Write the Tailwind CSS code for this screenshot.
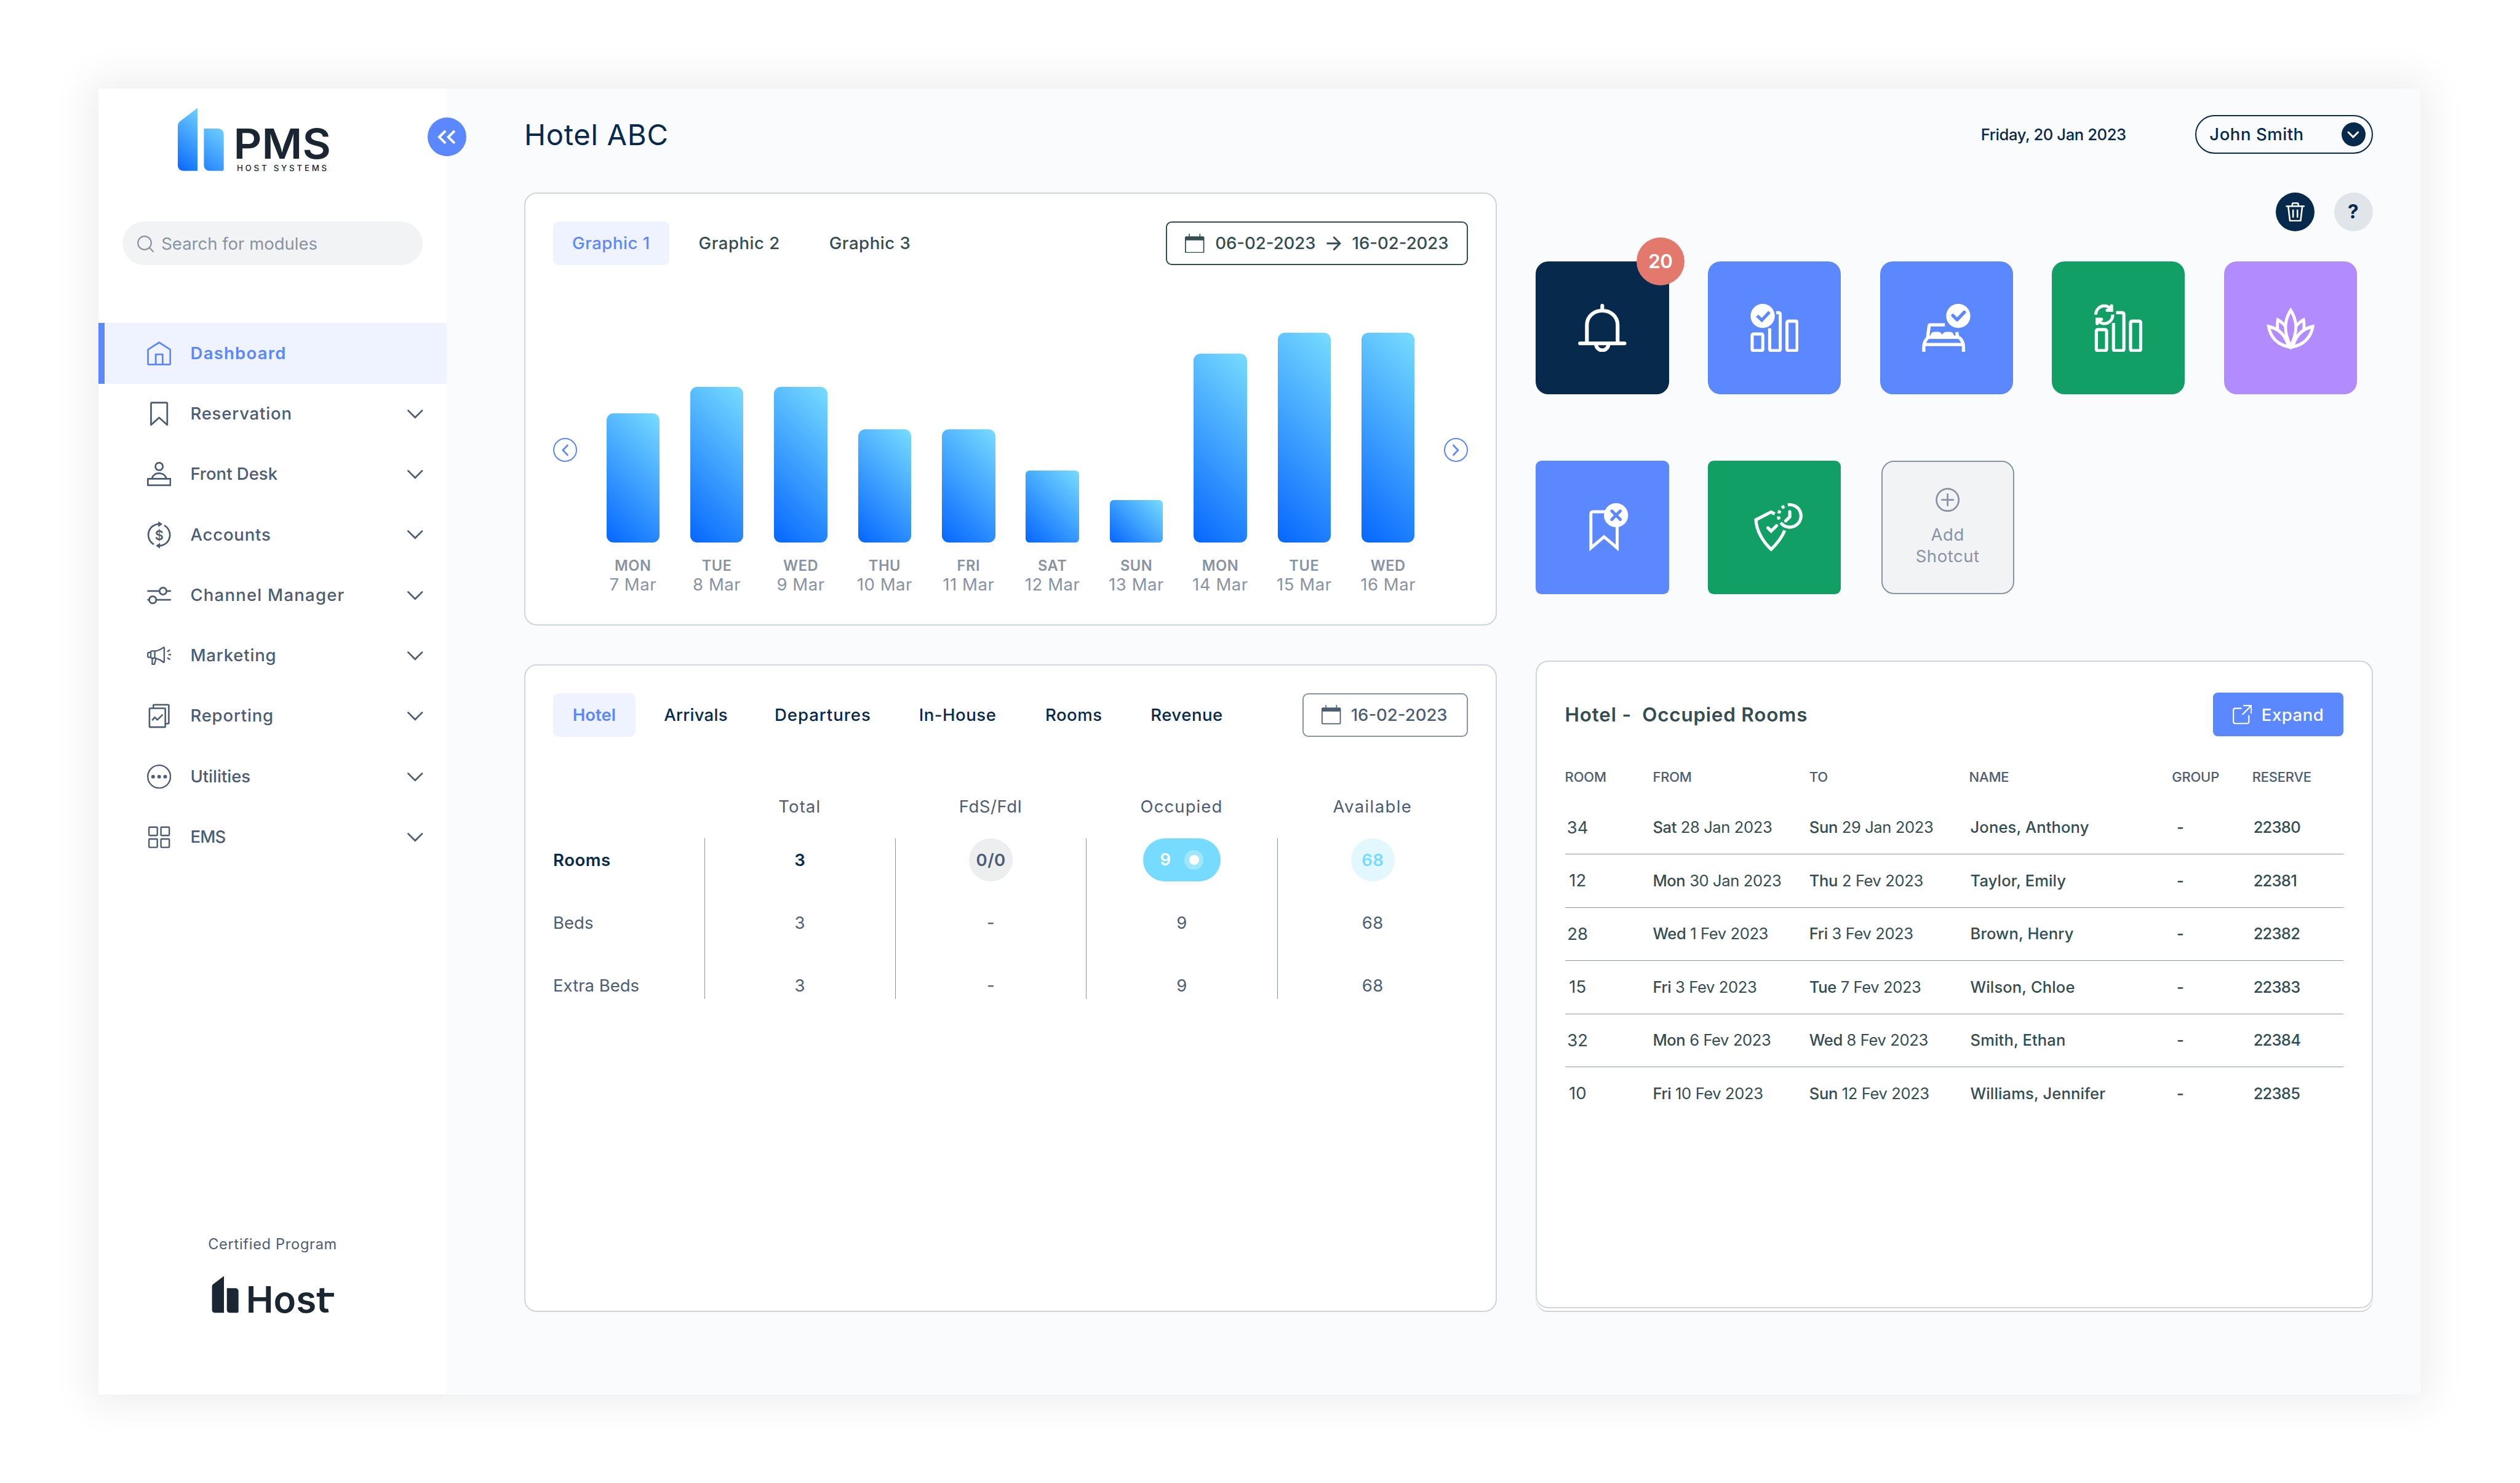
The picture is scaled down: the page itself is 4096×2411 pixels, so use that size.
<!DOCTYPE html>
<html lang="en" class="text-[31.45px]">
<head>
  <meta charset="UTF-8" />
  <meta name="viewport" content="width=device-width, initial-scale=1.0"/>
  <title>PMS - Hotel ABC</title>
  <script src="https://cdn.jsdelivr.net/npm/@tailwindcss/browser@4"></script>
</head>
<body class="bg-white font-[Inter,sans-serif] text-sm tracking-[0.02em] w-[4096px] h-[2411px] overflow-hidden pt-[144px] pl-[160px]">

  <div class="flex w-480 h-270 bg-[#f9fbfd] shadow-[0_0_1.9rem_0.5rem_rgba(0,0,0,0.065)]">

    <!-- Sidebar -->
    <aside class="relative flex flex-col w-72 bg-white text-[#4c5d73]">
      <div class="h-27.5 pt-4 pl-16.25">
        <svg class="w-31.75 h-13.25 overflow-visible" viewBox="0 0 127 53">
          <defs>
            <linearGradient id="logoFill" gradientUnits="userSpaceOnUse" x1=".5" y1="50" x2="31.3" y2="11.6">
              <stop offset="0" stop-color="#0c6cff"/>
              <stop offset="1" stop-color="#70d0ff"/>
            </linearGradient>
          </defs>
          <path fill="url(#logoFill)" d="M16.8.2V52.3H4.8a4.3 4.3 0 0 1-4.3-4.3V15.200q0-2.200 1.500-3.600z"/>
          <path fill="url(#logoFill)" d="M22.1 17.300h12a4.400 4.400 0 0 1 4.400 4.400v29a1.600 1.600 0 0 1-1.600 1.600H26.400a4.300 4.300 0 0 1-4.300-4.300z"/>
          <text x="46.6" y="42.100" textLength="80.500" lengthAdjust="spacingAndGlyphs" font-size="34.200" font-weight="600" letter-spacing="0" fill="#1a2733">PMS</text>
          <text x="49.300" y="52.300" textLength="75" font-size="6.800" font-weight="500" fill="#1a2733">HOST SYSTEMS</text>
        </svg>
      </div>
      <button class="absolute top-6 -right-4 flex items-center justify-center size-8 rounded-full bg-[#5b87ff]">
        <svg class="w-3.75 h-3" viewBox="0 0 15 12" fill="none" stroke="#fff" stroke-width="2"><path d="M6.700.9 1.500 6l5.200 5.100M14.200.9 9 6l5.200 5.100"/></svg>
      </button>

      <label class="flex items-center gap-1.5 h-9 w-62 ml-5 pl-3 pt-0.25 rounded-full bg-[#f2f3f5] text-[#8793a3] tracking-normal">
        <svg class="size-3.5" viewBox="0 0 14 14" fill="none" stroke="currentColor" stroke-width="1.100" stroke-linecap="round"><circle cx="6.100" cy="6.100" r="5.500"/><path d="m10.200 10.200 3.200 3.200"/></svg>
        <span>Search for modules</span>
      </label>

      <nav class="mt-12 font-medium tracking-[0.03em]">
        <a class="flex items-center h-12.5 pl-8.75 border-l-[10px] border-[#5b87ff] bg-[#eef3ff] text-[#5b87ff] font-semibold tracking-[0.045em]">
          <svg class="size-5 mr-4" viewBox="0 0 20 20" fill="none" stroke="currentColor" stroke-width="1.400" stroke-linejoin="round"><path d="M10 .9.8 6.800v11.600a.8.8 0 0 0 .8.8h16.800a.8.8 0 0 0 .8-.8V6.800zM7.200 19v-8.200h5.700V19"/></svg>
          Dashboard
        </a>
        <a class="flex items-center h-12.5 pl-10 pr-4.75">
          <svg class="size-5 mr-4" viewBox="0 0 20 20" fill="none" stroke="currentColor" stroke-width="1.400" stroke-linejoin="round"><path d="M3.300 19.200V1.400a.6.6 0 0 1 .6-.6h12.200a.6.6 0 0 1 .6.6v17.800L10 13.200z"/></svg>
          Reservation
          <svg class="w-3.5 h-2 ml-auto" viewBox="0 0 14 8" fill="none" stroke="currentColor" stroke-width="1.400" stroke-linecap="round"><path d="M1.200 1.200 7 7l5.800-5.800"/></svg>
        </a>
        <a class="flex items-center h-12.5 pl-10 pr-4.75 tracking-normal">
          <svg class="size-5 mr-4" viewBox="0 0 20 20" fill="none" stroke="currentColor" stroke-width="1.400"><circle cx="10" cy="3.750" r="3.100"/><path d="M4 13.800a6.100 5.500 0 0 1 12 0"/><path stroke-linejoin="round" d="M.7 13.900h18.600v5.400H.7z"/></svg>
          Front Desk
          <svg class="w-3.5 h-2 ml-auto" viewBox="0 0 14 8" fill="none" stroke="currentColor" stroke-width="1.400" stroke-linecap="round"><path d="M1.200 1.200 7 7l5.800-5.800"/></svg>
        </a>
        <a class="flex items-center h-12.5 pl-10 pr-4.75">
          <svg class="size-5 mr-4 overflow-visible" viewBox="0 0 20 20" fill="none" stroke="currentColor" stroke-width="1.400"><path d="M5.600 17.800A9 9 0 0 1 10.500 1M14.200 2.100A9 9 0 0 1 9.500 19"/><path fill="currentColor" stroke="none" d="M9.300-1.300 12.800 1 9.300 3.500zM10.700 16.500 7.300 19l3.400 2.300z"/><text x="10.100" y="14" text-anchor="middle" font-size="11" font-weight="600" letter-spacing="0" fill="currentColor" stroke="none">$</text></svg>
          Accounts
          <svg class="w-3.5 h-2 ml-auto" viewBox="0 0 14 8" fill="none" stroke="currentColor" stroke-width="1.400" stroke-linecap="round"><path d="M1.200 1.200 7 7l5.800-5.800"/></svg>
        </a>
        <a class="flex items-center h-12.5 pl-10 pr-4.75 tracking-[0.045em]">
          <svg class="size-5 mr-4" viewBox="0 0 20 20" fill="none" stroke="currentColor" stroke-width="1.400" stroke-linecap="round"><circle cx="13.200" cy="6.600" r="2.900"/><circle cx="4.700" cy="13.800" r="2.900"/><path d="M.8 6.600h9.400M16.200 6.600h3M.8 13.800h1M7.700 13.800h11.500"/></svg>
          Channel Manager
          <svg class="w-3.5 h-2 ml-auto" viewBox="0 0 14 8" fill="none" stroke="currentColor" stroke-width="1.400" stroke-linecap="round"><path d="M1.200 1.200 7 7l5.800-5.800"/></svg>
        </a>
        <a class="flex items-center h-12.5 pl-10 pr-4.75">
          <svg class="size-5 mr-4" viewBox="0 0 20 20" fill="none" stroke="currentColor" stroke-width="1.200" stroke-linecap="round" stroke-linejoin="round"><path d="M6.400 6.500C9.500 6.200 11.800 4.700 13.400 3.500q.8-.5.8.4v11.200q0 .9-.8.4C11.800 14.200 9.500 12.600 6.400 12.200zM6.400 6.300H4a.9.9 0 0 0-.9.9v4.100a.9.9 0 0 0 .9.9h2.400M3.100 7.500H1.500a.9.9 0 0 0-.9.9v2.200a.9.9 0 0 0 .9.900h1.600M4.300 12.500v4.700h1.800l1.300-4.500M17.100 6.600l1.500-1M18.200 9.300h1.200M17.100 12.100l1.500 1"/></svg>
          Marketing
          <svg class="w-3.5 h-2 ml-auto" viewBox="0 0 14 8" fill="none" stroke="currentColor" stroke-width="1.400" stroke-linecap="round"><path d="M1.200 1.200 7 7l5.800-5.800"/></svg>
        </a>
        <a class="flex items-center h-12.5 pl-10 pr-4.75">
          <svg class="size-5 mr-4" viewBox="0 0 20 20" fill="none" stroke="currentColor" stroke-width="1.300" stroke-linejoin="round"><rect x="2" y="3.800" width="13.100" height="15.600" rx=".5"/><path d="M5.200 3.800V1.400a.5.5 0 0 1 .5-.5h11.800a.5.5 0 0 1 .5.5V16a.5.5 0 0 1-.5.5h-2.400M4.200 13.800l2.200-2.500 2.100 2.100L13 9"/></svg>
          Reporting
          <svg class="w-3.5 h-2 ml-auto" viewBox="0 0 14 8" fill="none" stroke="currentColor" stroke-width="1.400" stroke-linecap="round"><path d="M1.200 1.200 7 7l5.800-5.800"/></svg>
        </a>
        <a class="flex items-center h-12.5 pl-10 pr-4.75 tracking-normal">
          <svg class="size-5 mr-4" viewBox="0 0 20 20"><circle cx="10" cy="10" r="9.400" fill="none" stroke="currentColor" stroke-width="1.200"/><g fill="currentColor"><circle cx="5" cy="10" r="1.500"/><circle cx="10" cy="10" r="1.500"/><circle cx="15" cy="10" r="1.500"/></g></svg>
          Utilities
          <svg class="w-3.5 h-2 ml-auto" viewBox="0 0 14 8" fill="none" stroke="currentColor" stroke-width="1.400" stroke-linecap="round"><path d="M1.200 1.200 7 7l5.800-5.800"/></svg>
        </a>
        <a class="flex items-center h-12.5 pl-10 pr-4.75 tracking-[-0.03em]">
          <svg class="size-5 mr-4" viewBox="0 0 20 20" fill="none" stroke="currentColor" stroke-width="1.200"><rect x="1.600" y="1.900" width="6.900" height="6.900" rx=".5"/><rect x="11.500" y="1.900" width="6.900" height="6.900" rx=".5"/><rect x="1.600" y="11.700" width="6.900" height="6.900" rx=".5"/><rect x="11.500" y="11.700" width="6.900" height="6.900" rx=".5"/></svg>
          EMS
          <svg class="w-3.5 h-2 ml-auto" viewBox="0 0 14 8" fill="none" stroke="currentColor" stroke-width="1.400" stroke-linecap="round"><path d="M1.200 1.200 7 7l5.800-5.800"/></svg>
        </a>
      </nav>

      <div class="flex flex-col items-center mt-auto mb-16.75">
        <p class="text-xs mb-4.5 tracking-[0.03em]">Certified Program</p>
        <svg class="w-25.5 h-7.75 overflow-visible" viewBox="0 0 102 31" fill="#1a2733">
          <path d="M10.700.3v30.400H3.300A2.500 2.500 0 0 1 .8 28.200V8.700q0-1 .8-1.600zM13.100 10.300h7.100a2.500 2.500 0 0 1 2.500 2.500v16.900a1 1 0 0 1-1 1h-6.100a2.500 2.500 0 0 1-2.500-2.500z"/>
          <text x="28.900" y="30.700" textLength="69" lengthAdjust="spacingAndGlyphs" font-size="30.200" font-weight="600" letter-spacing="0">Host</text>
          <path d="M94 14.200h7.700v3.100H94z"/>
        </svg>
      </div>
    </aside>

    <!-- Main -->
    <main class="flex-1 pl-16 pr-[2.46rem]">
      <header class="flex items-center h-19 mb-2.5 text-[#06294c]">
        <h1 class="text-2xl tracking-[0.015em] pt-0.25">Hotel ABC</h1>
        <span class="ml-auto pt-0.25 text-[0.8125rem] font-medium tracking-[-0.015em]">Friday, 20 Jan 2023</span>
        <button class="flex items-center justify-between w-36.75 h-8 ml-14.25 pl-2.75 pr-1.25 rounded-full border-[2.5px] border-[#06294c] font-medium">
          John Smith
          <span class="flex items-center justify-center size-5 rounded-full bg-[#06294c]">
            <svg class="w-2.5 h-1.5" viewBox="0 0 10 6" fill="none" stroke="#fff" stroke-width="1.500" stroke-linecap="round"><path d="m1 1 4 4 4-4"/></svg>
          </span>
        </button>
      </header>

      <div class="flex justify-between">
        <!-- Left column -->
        <div class="flex flex-col gap-8 w-[50.28rem]">
          <section class="h-89.5 p-[calc(1.5rem-2px)] rounded-[0.65rem] border-2 border-[#ced5dd] bg-white">
            <div class="flex gap-2 text-[#344d52] font-medium">
              <button class="h-9 w-24 rounded-[0.3rem] bg-[#eef3ff] text-[#5b87ff]">Graphic 1</button>
              <button class="h-9 w-25">Graphic 2</button>
              <button class="h-9 w-25">Graphic 3</button>
              <button class="flex items-center justify-between h-9 w-62.5 ml-auto px-3.75 rounded-[0.3rem] border-2 border-[#344d52] tracking-normal">
                <svg class="size-4" viewBox="0 0 16 16" fill="currentColor"><path d="M3.200 0h.8v2.200h8V0h.8v2.200H15a1 1 0 0 1 1 1V15a1 1 0 0 1-1 1H1a1 1 0 0 1-1-1V3.200a1 1 0 0 1 1-1h2.200zM.9 5.500v9.600h14.200V5.500z"/></svg>
                06-02-2023
                <svg class="size-3" viewBox="0 0 12 12" fill="none" stroke="currentColor" stroke-width="1.500" stroke-linecap="round" stroke-linejoin="round"><path d="M.8 6h10.400M6.300 1l4.900 5-4.900 5"/></svg>
                16-02-2023
              </button>
            </div>
            <div class="relative mt-14">
              <button class="absolute left-0 top-21.75 flex items-center justify-center size-5 rounded-full border-2 border-[#5b87ff]">
                <svg class="w-1.5 h-2.5" viewBox="0 0 6 10" fill="none" stroke="#5b87ff" stroke-width="1.400"><path d="M5.200.6 1 5l4.200 4.400"/></svg>
              </button>
              <div id="chart" class="flex items-end justify-between mx-11"></div>
              <button class="absolute right-0 top-21.75 flex items-center justify-center size-5 rounded-full border-2 border-[#5b87ff]">
                <svg class="w-1.5 h-2.5" viewBox="0 0 6 10" fill="none" stroke="#5b87ff" stroke-width="1.400"><path d="M.8.6 5 5 .8 9.400"/></svg>
              </button>
            </div>
          </section>

          <section class="h-134 p-[calc(1.5rem-2px)] rounded-[0.65rem] border-2 border-[#ced5dd] bg-white">
            <div class="flex gap-2 text-[#06294c] font-medium">
              <button class="h-9 w-17 rounded-[0.3rem] bg-[#eef3ff] text-[#5b87ff] font-semibold tracking-normal">Hotel</button>
              <button class="h-9 w-21 tracking-[0.01em]">Arrivals</button>
              <button class="h-9 w-27.5 tracking-[0.035em]">Departures</button>
              <button class="h-9 w-24.25">In-House</button>
              <button class="h-9 w-19.75">Rooms</button>
              <button class="h-9 w-23">Revenue</button>
              <button class="flex items-center justify-between h-9 w-34.25 ml-auto pl-3.75 pr-4 rounded-[0.3rem] border-2 border-[#8696a6] text-[#4c5d73] tracking-normal">
                <svg class="size-4" viewBox="0 0 16 16" fill="currentColor"><path d="M3.200 0h.8v2.200h8V0h.8v2.200H15a1 1 0 0 1 1 1V15a1 1 0 0 1-1 1H1a1 1 0 0 1-1-1V3.200a1 1 0 0 1 1-1h2.200zM.9 5.500v9.600h14.200V5.500z"/></svg>
                16-02-2023
              </button>
            </div>
            <div class="flex mt-12 text-[#4c5d73] text-center">
              <div class="flex flex-col gap-4 w-31.25 pt-9 text-left tracking-normal">
                <div class="h-9 leading-9 font-semibold text-[#06294c] tracking-[0.02em]">Rooms</div>
                <div class="h-9 leading-9">Beds</div>
                <div class="h-9 leading-9">Extra Beds</div>
              </div>
              <div class="w-39.5">
                <div class="h-9 tracking-[0.04em]">Total</div>
                <div class="flex flex-col gap-4 h-33.25 border-l border-[#8794a5]">
                  <div class="h-9 leading-9 shrink-0 font-semibold text-[#06294c]">3</div>
                  <div class="h-9 leading-9 shrink-0">3</div>
                  <div class="h-9 leading-9 shrink-0">3</div>
                </div>
              </div>
              <div class="w-39.5">
                <div class="h-9">FdS/FdI</div>
                <div class="flex flex-col items-center gap-4 h-33.25 border-l border-[#8794a5]">
                  <div class="size-9 leading-9 shrink-0 rounded-full bg-[#edeef0] font-semibold">0/0</div>
                  <div class="h-9 leading-9 shrink-0">-</div>
                  <div class="h-9 leading-9 shrink-0">-</div>
                </div>
              </div>
              <div class="w-39.5">
                <div class="h-9 tracking-[0.04em]">Occupied</div>
                <div class="flex flex-col items-center gap-4 h-33.25 border-l border-[#8794a5]">
                  <div class="flex items-center justify-between w-16 h-9 shrink-0 px-3.5 rounded-full bg-[#76dbff] text-white font-semibold">
                    9
                    <span class="flex items-center justify-center size-4 rounded-full bg-[#9fe7ff]"><i class="size-2 rounded-full bg-white"></i></span>
                  </div>
                  <div class="h-9 leading-9 shrink-0">9</div>
                  <div class="h-9 leading-9 shrink-0">9</div>
                </div>
              </div>
              <div class="w-39.5">
                <div class="h-9 tracking-[0.05em]">Available</div>
                <div class="flex flex-col items-center gap-4 h-33.25 border-l border-[#8794a5]">
                  <div class="size-9 leading-9 shrink-0 rounded-full bg-[#e3f7ff] text-[#76dbff] font-semibold">68</div>
                  <div class="h-9 leading-9 shrink-0">68</div>
                  <div class="h-9 leading-9 shrink-0">68</div>
                </div>
              </div>
            </div>
          </section>
        </div>

        <!-- Right column -->
        <div class="w-173">
          <div class="flex justify-end gap-4 text-[#06294c]">
            <button class="flex items-center justify-center size-8 rounded-full bg-[#06294c]">
              <svg class="size-4" viewBox="0 0 16 16" fill="none" stroke="#fff" stroke-width="1.300" stroke-linecap="round" stroke-linejoin="round"><path d="M5.500 3V1.600a1 1 0 0 1 1-1h3a1 1 0 0 1 1 1V3M.8 3.200h14.400M2.200 3.500l1.400 11.800h8.800l1.400-11.800M6.200 6.500v5.600M9.800 6.500v5.600"/></svg>
            </button>
            <button class="size-8 rounded-full bg-[#dfe5e9] text-base font-bold">?</button>
          </div>

          <!-- Shortcuts -->
          <div class="grid grid-cols-[repeat(5,6.875rem)] gap-x-[2.015rem] gap-y-13.75 mt-6.25">
            <div class="relative flex items-center justify-center h-27.5 rounded-[0.65rem] bg-[#06294c]">
              <svg class="size-10" viewBox="0 0 40 40" fill="none" stroke="#fff" stroke-width="3.100" stroke-linecap="round"><path d="M20 1.600V5M7.300 32V17.600C7.300 10.500 13 5.600 20 5.600s12.700 4.900 12.700 12V32M1.600 32.700h36.800M14.900 33.500a5.100 4.900 0 0 0 10.200 0"/></svg>
              <span class="absolute -top-5 -right-3.25 size-10 leading-10 rounded-full bg-[#e2796c] text-center text-base font-semibold tracking-[-0.02em] text-white">20</span>
            </div>
            <div class="flex items-center justify-center h-27.5 rounded-[0.65rem] bg-[#5b87ff]">
              <svg class="size-10" viewBox="0 0 40 40" fill="none" stroke="#fff" stroke-width="2.600"><circle cx="10.200" cy="10" r="10" fill="#fff" stroke="none"/><path stroke="#5b87ff" d="m5.600 9.800 3.900 3.700 6.300-6.700"/><rect x="1.500" y="24.900" width="8.800" height="13.800" rx="1.200"/><path d="M21.300 7.300h2.200a1.200 1.200 0 0 1 1.200 1.200v29a1.200 1.200 0 0 1-1.200 1.200h-6.300a1.200 1.200 0 0 1-1.200-1.200V20.200"/><rect x="30.300" y="14.300" width="8.400" height="24.400" rx="1.200"/></svg>
            </div>
            <div class="flex items-center justify-center h-27.5 rounded-[0.65rem] bg-[#5b87ff]">
              <svg class="size-10" viewBox="0 0 40 40" fill="none" stroke="#fff" stroke-width="2.700"><circle cx="30" cy="10" r="10" fill="#fff" stroke="none"/><path stroke="#5b87ff" stroke-linecap="round" stroke-linejoin="round" d="m25.500 9.600 3.500 3.600 6-6.300"/><path d="M18.900 17.400H6.900a1 1 0 0 0-1 .9L4.600 27.800M28.800 23.300l.6 4.500M4 27.600h27M1.500 40v-4.500C1.500 31.800 3 29.700 5 27.800M34.300 40v-4.500c0-3.700-1.500-5.800-3.500-7.700M1.500 33.600h32.800"/><path fill="#fff" stroke="none" d="M6.800 27.200c.2-2.500 1.600-4 3.600-4h2.800c1.600 0 2.800.8 3.500 2.400.7-1.600 1.900-2.400 3.500-2.400h2.800c2 0 3.400 1.500 3.600 4z"/></svg>
            </div>
            <div class="flex items-center justify-center h-27.5 rounded-[0.65rem] bg-[#119f66]">
              <svg class="size-10" viewBox="0 0 40 40" fill="none" stroke="#fff" stroke-width="2.600"><rect x="1.700" y="21.300" width="8.500" height="17.400" rx="1.200"/><path d="M18.100 7.300h5.200a1.200 1.200 0 0 1 1.200 1.200v29a1.200 1.200 0 0 1-1.200 1.200h-6.200a1.200 1.200 0 0 1-1.200-1.200V15.800"/><rect x="30" y="14.300" width="8.400" height="24.400" rx="1.200"/><path d="M1.300 8.900a7 7.200 0 0 1 12.400-4.600M15.300 8.900A7 7.200 0 0 1 3 13.800"/><path stroke-linecap="round" d="M14.300 1.600v3.700h-3.600M2.400 16.300v-3.500H6"/></svg>
            </div>
            <div class="flex items-center justify-center h-27.5 rounded-[0.65rem] bg-[#b28cff]">
              <svg class="size-10" viewBox="0 0 40 40" fill="none" stroke="#fff" stroke-width="2.500"><path d="M20 5.300c-2.700 4.200-4.300 8.900-4.300 14.200 0 5.500 1.800 10.500 4.300 15.800 2.500-5.300 4.300-10.300 4.300-15.800 0-5.300-1.600-10-4.300-14.200z"/><path d="M20 36c-10.300-1.800-16.500-7.500-18.300-17.300C10 20.500 15.800 25.500 18.300 35.500M20 36c10.300-1.800 16.500-7.500 18.300-17.300C30 20.500 24.200 25.500 21.700 35.500M9.300 22c-.5-2.900-.4-5.900.1-8.800 2.200 1.200 4.200 3 6.200 5.200M30.700 22c.5-2.900.4-5.900-.1-8.800-2.200 1.200-4.200 3-6.200 5.200"/></svg>
            </div>
            <div class="flex items-center justify-center h-27.5 rounded-[0.3rem] bg-[#5b87ff]">
              <svg class="size-10 overflow-visible" viewBox="0 0 40 40" fill="none" stroke="#fff" stroke-width="2.500"><path d="M23 7.100H12a1.400 1.400 0 0 0-1.400 1.400v28.600l10.900-9.300 10.800 9.300V19"/><circle cx="31.400" cy="10" r="10" fill="#fff" stroke="none"/><path stroke="#5b87ff" stroke-linecap="round" d="m27.900 6.500 7 7M34.900 6.500l-7 7"/></svg>
            </div>
            <div class="flex items-center justify-center h-27.5 rounded-[0.3rem] bg-[#119f66]">
              <svg class="size-10 overflow-visible" viewBox="0 0 40 40" fill="none" stroke="#fff" stroke-width="2.600"><path d="m20.200 9-3-1.700-12.600 6.500C5 22 9.500 31 17.200 38.200c5.400-5.200 9.200-10.500 11.200-15.600"/><path stroke-linecap="round" d="m14.500 20.400 2.700 2.700 4.500-4.400M32.600 7v4.400l-3.400 3.300"/><path d="M31 1.400A9.300 9.300 0 1 1 25.100 16.100"/><path stroke-dasharray="2.560" d="M28.100 2.500A9.300 9.300 0 0 0 23.750 13.500"/></svg>
            </div>
            <button class="flex flex-col items-center h-27.5 w-27.5 ml-0.25 pt-5.25 rounded-[0.65rem] border-2 border-[#8793a3] bg-[#f2f3f5] text-[#8793a3] leading-4.5">
              <svg class="size-5 mb-2.5" viewBox="0 0 20 20" fill="none" stroke="currentColor" stroke-width="1.400" stroke-linecap="round"><circle cx="10" cy="10" r="9.200"/><path d="M10 5.300v9.400M5.300 10h9.400"/></svg>
              Add<br>Shotcut
            </button>
          </div>

          <!-- Occupied rooms -->
          <section class="h-[33.5rem] mt-13.75 p-[calc(1.5rem-2px)] pt-[calc(1.625rem-1px)] rounded-[0.65rem] border-2 border-[#ced5dd] bg-white shadow-[0_4px_0_white,0_6px_0_#ced5dd] text-[#344d52]">
            <div class="flex items-center justify-between h-9">
              <h2 class="pt-0.25 text-base font-semibold tracking-[0.025em] whitespace-pre">Hotel -  Occupied Rooms</h2>
              <button class="flex items-center gap-2 h-9 w-27 pl-4 pt-0.25 rounded-[0.25rem] bg-[#5b87ff] text-white font-medium">
                <svg class="size-4" viewBox="0 0 16 16" fill="none" stroke="currentColor" stroke-width="1.100" stroke-linecap="round" stroke-linejoin="round"><path d="M7 2.900H2.100A1.500 1.500 0 0 0 .6 4.400v9.500a1.500 1.500 0 0 0 1.500 1.500h9.800a1.500 1.500 0 0 0 1.500-1.500V9M9.200.6h6.200v6.200M15.200.8 8.300 7.800"/></svg>
                Expand
              </button>
            </div>
            <div class="grid grid-cols-[4.54rem_8.09rem_8.26rem_10.48rem_4.15rem_1fr] items-center h-4 mt-6.5 text-[0.7rem] font-medium tracking-[-0.01em] text-[#4c5d73]">
              <span>ROOM</span><span>FROM</span><span>TO</span><span>NAME</span><span>GROUP</span><span>RESERVE</span>
            </div>
            <div id="rooms" class="mt-3"></div>
          </section>
        </div>
      </div>
    </main>
  </div>

  <script>
    // bar height in rem
    const days = [
      ["MON", "7 Mar", 6.69], ["TUE", "8 Mar", 8.04], ["WED", "9 Mar", 8.04], ["THU", "10 Mar", 5.85],
      ["FRI", "11 Mar", 5.85], ["SAT", "12 Mar", 3.71], ["SUN", "13 Mar", 2.19], ["MON", "14 Mar", 9.76],
      ["TUE", "15 Mar", 10.84], ["WED", "16 Mar", 10.84]
    ];

    document.getElementById("chart").innerHTML = days.map(([day, date, h]) => `
      <div class="flex flex-col items-center w-11 text-[#8793a3]">
        <div class="w-11 bg-[linear-gradient(45deg,#0566ff,#78dcff)]" style="height:${h}rem;border-radius:${h > 5 ? 0.36 : 0.2}rem"></div>
        <div class="mt-2.75 h-4 leading-4 text-xs font-semibold">${day}</div>
        <div class="h-4 leading-4 whitespace-nowrap">${date}</div>
      </div>`).join("");

    const rooms = [
      ["34", "Sat", "28 Jan 2023", "Sun", "29 Jan 2023", "Jones, Anthony", "22380"],
      ["12", "Mon", "30 Jan 2023", "Thu", "2 Fev 2023", "Taylor, Emily", "22381"],
      ["28", "Wed", "1 Fev 2023", "Fri", "3 Fev 2023", "Brown, Henry", "22382"],
      ["15", "Fri", "3 Fev 2023", "Tue", "7 Fev 2023", "Wilson, Chloe", "22383"],
      ["32", "Mon", "6 Fev 2023", "Wed", "8 Fev 2023", "Smith, Ethan", "22384"],
      ["10", "Fri", "10 Fev 2023", "Sun", "12 Fev 2023", "Williams, Jennifer", "22385"]
    ];

    document.getElementById("rooms").innerHTML = rooms.map(([room, d1, from, d2, to, name, reserve]) => `
      <div class="grid grid-cols-[4.54rem_8.09rem_8.26rem_10.48rem_4.15rem_1fr] items-center h-11 border-b border-[#8b98a8] last:border-transparent text-[0.8125rem]">
        <span class="w-5.25 text-center text-sm tracking-normal">${room}</span>
        <span class="tracking-[-0.015em]"><b class="font-medium">${d1}</b> ${from}</span>
        <span class="tracking-[-0.015em]"><b class="font-medium">${d2}</b> ${to}</span>
        <span class="pl-0.25 font-medium tracking-[0.005em]">${name}</span>
        <span class="pl-1 font-medium">-</span>
        <span class="pl-0.25 font-medium tracking-[-0.03em]">${reserve}</span>
      </div>`).join("");
  </script>
</body>
</html>
